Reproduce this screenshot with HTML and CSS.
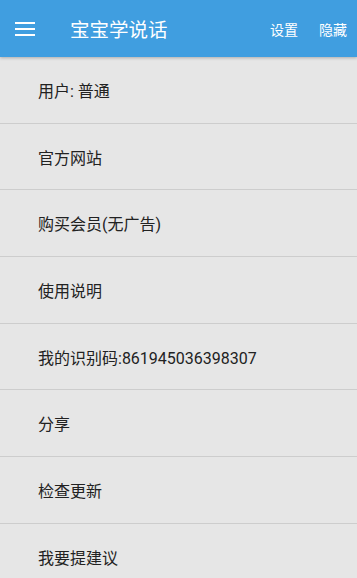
FILE: index.html
```html
<!DOCTYPE html>
<html lang="zh">
<head>
  <meta charset="UTF-8">
  <meta name="viewport" content="width=device-width, initial-scale=1">
  <title>宝宝学说话</title>
  <link rel="stylesheet" href="styles.css">
</head>
<body>

<!-- Toolbar -->
<div class="toolbar">
  <div class="menu-icon">
    <svg width="20" height="14" viewBox="0 0 20 14">
      <rect x="0" y="0" width="20" height="2" fill="#fff"/>
      <rect x="0" y="6" width="20" height="2" fill="#fff"/>
      <rect x="0" y="12" width="20" height="2" fill="#fff"/>
    </svg>
  </div>
  <div class="title">宝宝学说话</div>
  <div class="action">设置</div>
  <div class="action">隐藏</div>
</div>

<!-- Menu list -->
<div class="list">
  <div class="item">用户: 普通</div>
  <div class="item">官方网站</div>
  <div class="item">购买会员(无广告)</div>
  <div class="item">使用说明</div>
  <div class="item">我的识别码:861945036398307</div>
  <div class="item">分享</div>
  <div class="item">检查更新</div>
  <div class="item">我要提建议</div>
</div>

</body>
</html>
```

FILE: styles.css
```css
body {
  margin: 0;
  font-family: Roboto, "Noto Sans CJK SC", sans-serif;
  background: #e6e6e6;
  color: #222;
  overflow: hidden;
}
.toolbar {
  display: flex;
  align-items: center;
  height: 57px;
  background: #409ee0;
  color: #fff;
  box-shadow: 0 1px 3px rgba(0,0,0,0.25);
  position: relative;
}
.menu-icon {
  width: 20px;
  height: 14px;
  margin-left: 15px;
  display: flex;
}
.title {
  margin-left: 35px;
  font-size: 19.5px;
  flex: 1;
}
.action {
  font-size: 14px;
  margin-right: 10px;
  margin-left: 11px;
}
.item {
  height: 65.7px;
  display: flex;
  align-items: center;
  padding-left: 38px;
  border-bottom: 1px solid #cdcdcd;
  font-size: 16px;
}
```
